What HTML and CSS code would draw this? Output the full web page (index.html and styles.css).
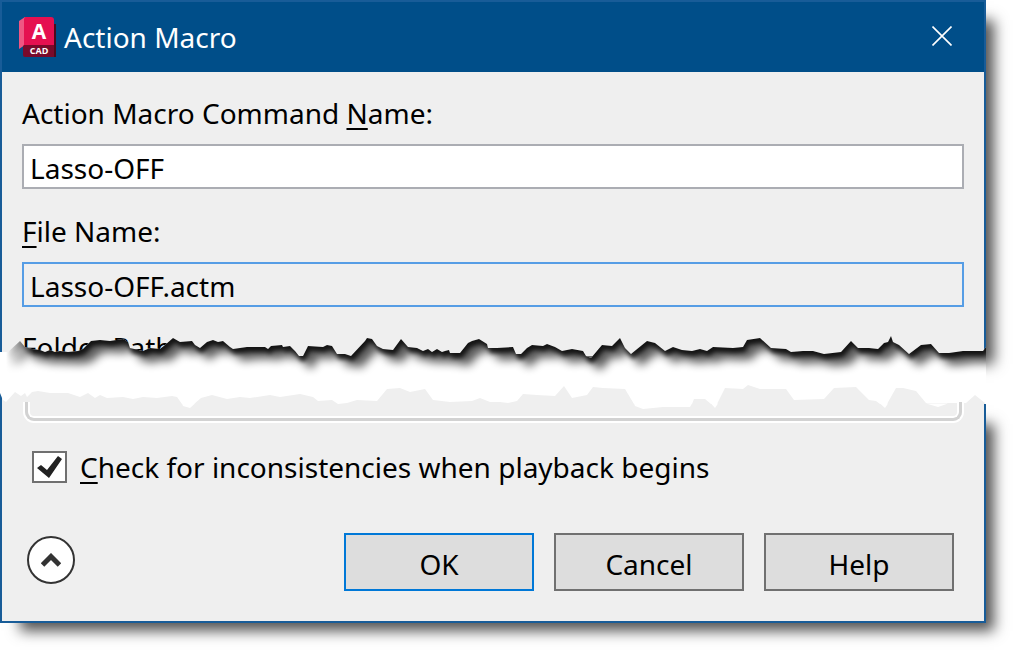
FILE: index.html
```html
<!DOCTYPE html>
<html lang="en">
<head>
<meta charset="utf-8">
<title>Action Macro</title>
<link rel="stylesheet" href="styles.css">
</head>
<body>
<main class="dialog">
  <section class="piece piece-top">
    <header class="titlebar">
      <svg class="logo" viewBox="0 0 38 40" aria-hidden="true">
        <path d="M30 7h7v33H10z" fill="#4d0a1c"/>
        <path d="M0 4L6 0v28l-6 4z" fill="#ef5683"/>
        <path d="M6 0h26q3 0 3 3v25H5V2z" fill="#e51050"/>
        <path d="M5 28h30v12H6q-2 0-2-2v-9z" fill="#780a2b"/>
        <text class="logo-a" x="20" y="22" text-anchor="middle">A</text>
        <text class="logo-cad" x="20" y="37" text-anchor="middle">CAD</text>
      </svg>
      <h1 class="title">Action Macro</h1>
      <button class="close" type="button" aria-label="Close">
        <svg class="close-icon" viewBox="0 0 20 20"><path d="M.5.5l19 19M19.5.5l-19 19" fill="none" stroke="#fff" stroke-width="1.6"/></svg>
      </button>
    </header>
    <div class="fields">
      <label class="label" for="command">Action Macro Command <u>N</u>ame:</label>
      <input class="text" id="command" type="text" value="Lasso-OFF">
      <label class="label" for="file"><u>F</u>ile Name:</label>
      <input class="text text-readonly" id="file" type="text" value="Lasso-OFF.actm" readonly>
      <div class="label label-torn">Folder Path:</div>
    </div>
  </section>

  <svg class="tear" viewBox="0 330 986 82" preserveAspectRatio="none" aria-hidden="true">
    <defs>
      <path id="upper" d="M-40 300V352H8L20 341 25 347 32 349 40 350 45 352 50 350 55 352 60 351 68 352 78 351 83 349 91 341 100 340 110 341 123 339 128 342 130 348 143 351 150 348 160 349 165 345 173 338 180 342 192 341 195 345 200 348 207 342 213 340 218 342 223 341 230 347 233 349 247 347 265 347 268 349 271 346 282 345 283 347 290 346 295 351 299 356 303 356 308 346 323 347 327 345 332 346 337 354 345 354 351 356 365 341 367 338 372 339 377 346 383 349 393 350 401 339 408 347 417 348 423 351 428 349 432 352 437 349 442 352 445 351 449 350 450 353 460 353 468 343 472 341 479 339 487 344 488 348 497 348 513 347 516 354 521 354 527 348 532 345 543 346 547 344 555 347 562 351 572 349 583 351 586 356 591 358 602 345 612 346 620 338 625 348 631 354 647 341 655 343 665 351 673 347 682 350 692 351 700 349 707 351 713 347 733 348 743 347 747 340 760 338 771 348 786 349 791 352 803 351 813 351 824 354 841 352 851 341 858 348 869 348 878 349 884 343 888 342 891 336 893 342 899 345 909 354 921 345 931 344 939 353 949 353 963 351 983 351 986 347 1020 350V300z"/>
      <clipPath id="gap">
        <path d="M0 412V352H8L20 341 25 347 32 349 40 350 45 352 50 350 55 352 60 351 68 352 78 351 83 349 91 341 100 340 110 341 123 339 128 342 130 348 143 351 150 348 160 349 165 345 173 338 180 342 192 341 195 345 200 348 207 342 213 340 218 342 223 341 230 347 233 349 247 347 265 347 268 349 271 346 282 345 283 347 290 346 295 351 299 356 303 356 308 346 323 347 327 345 332 346 337 354 345 354 351 356 365 341 367 338 372 339 377 346 383 349 393 350 401 339 408 347 417 348 423 351 428 349 432 352 437 349 442 352 445 351 449 350 450 353 460 353 468 343 472 341 479 339 487 344 488 348 497 348 513 347 516 354 521 354 527 348 532 345 543 346 547 344 555 347 562 351 572 349 583 351 586 356 591 358 602 345 612 346 620 338 625 348 631 354 647 341 655 343 665 351 673 347 682 350 692 351 700 349 707 351 713 347 733 348 743 347 747 340 760 338 771 348 786 349 791 352 803 351 813 351 824 354 841 352 851 341 858 348 869 348 878 349 884 343 888 342 891 336 893 342 899 345 909 354 921 345 931 344 939 353 949 353 963 351 983 351 986 347V412z"/>
      </clipPath>
      <filter id="soft" x="-5%" y="-50%" width="110%" height="200%"><feGaussianBlur stdDeviation="5"/></filter>
      <filter id="tight" x="-5%" y="-50%" width="110%" height="200%"><feGaussianBlur stdDeviation="2"/></filter>
      <linearGradient id="fade" gradientUnits="userSpaceOnUse" x1="6" y1="0" x2="34" y2="0"><stop offset="0" stop-color="#000"/><stop offset="1" stop-color="#fff"/></linearGradient>
      <mask id="start" maskUnits="userSpaceOnUse" x="0" y="300" width="986" height="120"><rect y="300" width="986" height="120" fill="url(#fade)"/></mask>
    </defs>
    <g clip-path="url(#gap)">
      <rect y="330" width="986" height="74" fill="#fff"/>
      <g mask="url(#start)">
        <use href="#upper" transform="translate(10 12)" filter="url(#soft)" opacity=".65"/>
        <use href="#upper" transform="translate(2 5)" filter="url(#tight)" opacity=".78"/>
      </g>
    </g>
    <path d="M0 404V393L3 400 6 402 15 392 21 396 25 393 27 397 32 392 38 391 50 393 68 393 80 397 88 393 95 398 100 395 107 398 123 397 133 399 143 397 157 398 172 396 177 397 182 404H194L201 398 212 395 227 399 240 397 250 398 270 395 280 397 300 394 313 397 318 401 332 400 338 404 347 403 357 400 377 401 387 389 400 388 410 392 425 389 433 400 450 402 472 401 480 398 490 402 500 402 508 403 517 401 523 394 537 395 555 396 564 386 572 398 587 395 593 387 603 388 625 389 628 394 634 404H692L694 399 705 399 711 404H717L725 388 743 389 748 385 760 389 786 389 794 400 824 399 834 388 856 387 869 400 876 401 880 404H887L896 388 903 388 916 391 926 403 956 403 966 403 975 395 985 403V404z" fill="#efefef"/>
    <path d="M182 403.500L183 406 190 408 195 403.500zM634 403.500L635 406 643 409 663 407 690 407 692 403.500zM711 403.500L715 408 718 403.500zM880 403.500L885 408 888 403.500zM926 403.500L938 407 948 403.500z" fill="#fff"/>
    <path d="M0 393l2 5v14H0z" fill="#185c98"/>
  </svg>

  <section class="piece piece-bottom">
    <div class="group-end"></div>
    <div class="check-row">
      <input class="check" id="check" type="checkbox" checked>
      <label class="check-label" for="check"><u>C</u>heck for inconsistencies when playback begins</label>
    </div>
    <footer class="actions">
      <button class="collapse" type="button" aria-label="Show less">
        <svg class="collapse-icon" viewBox="0 0 20 14"><path d="M1.500 12L10 3.500l8.500 8.500" fill="none" stroke="#333" stroke-width="5"/></svg>
      </button>
      <button class="button button-default" type="button">OK</button>
      <button class="button" type="button">Cancel</button>
      <button class="button" type="button">Help</button>
    </footer>
  </section>
</main>
</body>
</html>
```

FILE: styles.css
```css
* {
  box-sizing: border-box;
}

body {
  margin: 0;
  padding: 0 30px 30px 0;
  background: #fff;
  color: #000;
  font: 28px/40px "Noto Sans", "Open Sans", sans-serif;
}

.piece {
  border: 0 solid #185c98;
  background: #efefef;
  box-shadow: 14px 14px 13px -6px rgba(0, 0, 0, 0.68);
}

.piece-top {
  border-width: 2px 2px 0;
}

.piece-bottom {
  display: flow-root;
  border-width: 0 2px 2px;
}

.titlebar {
  display: flex;
  align-items: center;
  height: 70px;
  padding: 0 32px 0 17px;
  background: #004e89;
  color: #fff;
}

.logo {
  width: 38px;
  height: 40px;
}

.logo-a,
.logo-cad {
  fill: #fff;
  font-family: "Open Sans", sans-serif;
  font-weight: 700;
}

.logo-a {
  font-size: 21px;
}

.logo-cad {
  font-size: 9px;
}

.title {
  flex: 1;
  margin: 0 0 0 7px;
  font-size: 28px;
  font-weight: 400;
}

.close {
  display: flex;
  padding: 0 0 2px;
  border: 0;
  background: none;
}

.close-icon {
  width: 20px;
  height: 20px;
}

.fields {
  display: flex;
  flex-direction: column;
  padding: 21px 20px 0;
}

u {
  text-decoration-thickness: 2px;
  text-underline-offset: 4px;
}

.text {
  width: 100%;
  height: 45px;
  margin: 11px 0 22px;
  padding: 2px 6px 0;
  border: 2px solid #abadb3;
  border-radius: 0;
  outline: 0;
  background: #fff;
  color: #000;
  font: inherit;
}

.text-readonly {
  margin-bottom: 20px;
  border-color: #569de5;
  background: #efefef;
}

.label-torn {
  margin-bottom: -11px;
}

.tear {
  position: relative;
  z-index: 1;
  display: block;
  width: 100%;
  height: 82px;
  margin: -26px 0 -8px;
}

.group-end {
  position: relative;
  z-index: 2;
  height: 22px;
  margin: -5px 22px 0 23px;
  border: 3px solid #d2d2d2;
  border-top: 0;
  border-radius: 0 0 9px 9px;
  box-shadow: 0 0 0 2px #fff, inset 0 0 0 2px #fff;
  clip-path: inset(3px -2px -2px -2px);
}

.check-row {
  display: flex;
  align-items: center;
  gap: 13px;
  padding: 26px 30px 0;
}

.check {
  appearance: none;
  width: 35px;
  height: 32px;
  margin: 0;
  border: 2px solid #707070;
  background: #fff;
}

.check:checked::before {
  content: "";
  display: block;
  width: 31px;
  height: 28px;
  background: #222;
  clip-path: polygon(3px 15px, 7px 12px, 13px 17px, 24px 3px, 28px 6px, 15px 25px);
}

.actions {
  display: flex;
  align-items: flex-start;
  gap: 20px;
  padding: 46px 30px 30px 25px;
}

.collapse {
  display: flex;
  align-items: center;
  justify-content: center;
  width: 48px;
  height: 48px;
  margin: 3px auto 0 0;
  padding: 0;
  border: 2px solid #333;
  border-radius: 50%;
  background: #fff;
}

.collapse-icon {
  width: 20px;
  height: 14px;
}

.button {
  width: 190px;
  height: 58px;
  padding: 4px 0 0;
  border: 2px solid #707070;
  background: #ddd;
  color: #000;
  font: inherit;
}

.button-default {
  border-color: #0078d7;
}
```
